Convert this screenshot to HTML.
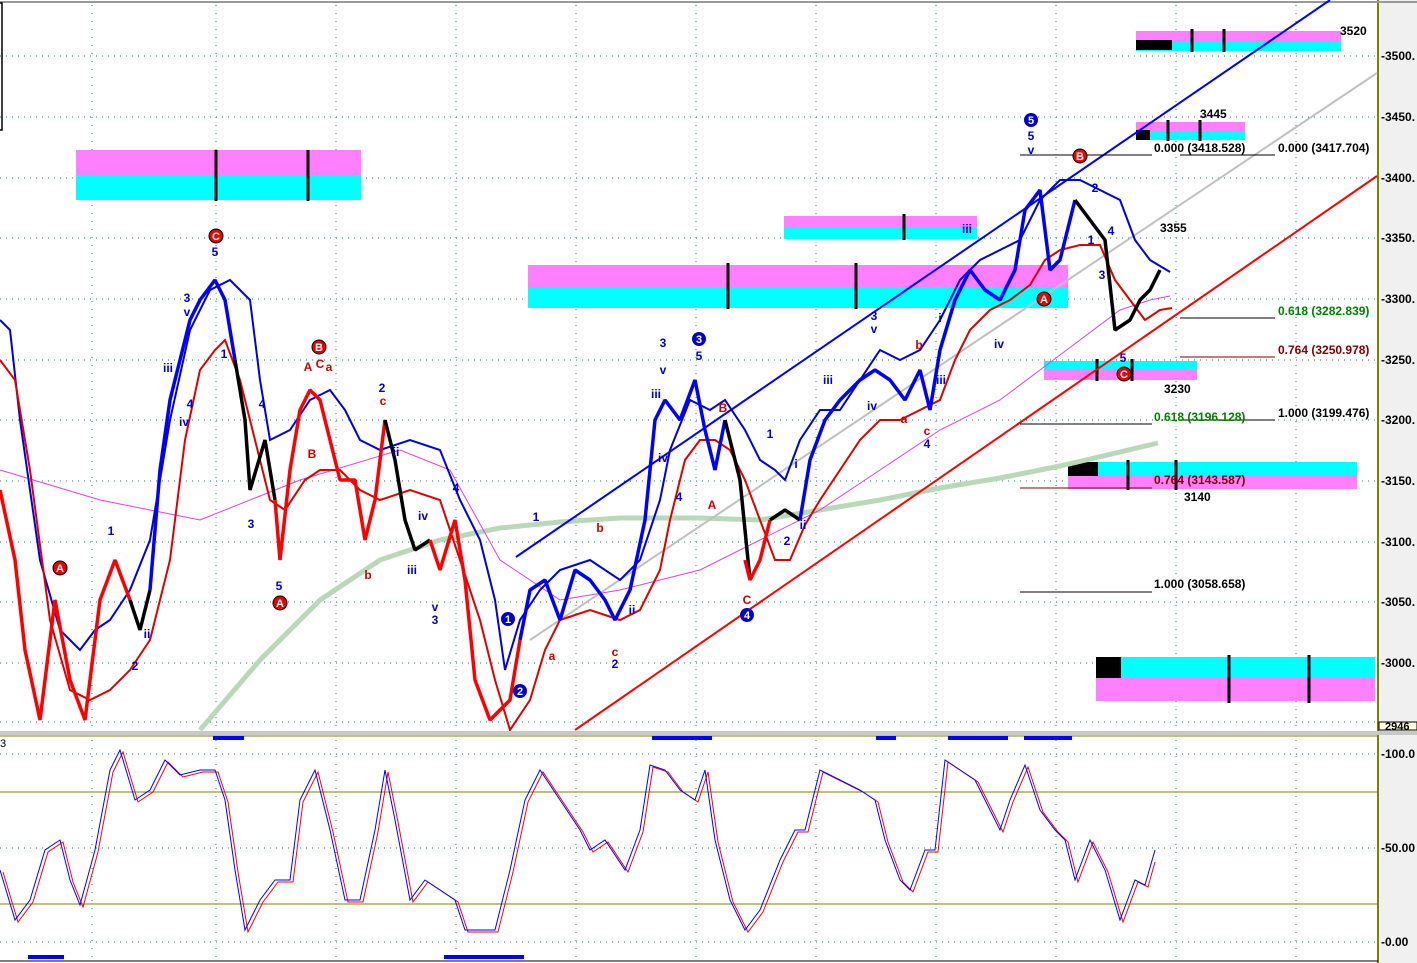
<!DOCTYPE html>
<html><head><meta charset="utf-8"><style>
html,body{margin:0;padding:0;background:#fff;}
svg{display:block;font-family:"Liberation Sans",Arial,sans-serif;}
</style></head><body>
<svg width="1417" height="963" viewBox="0 0 1417 963" xmlns="http://www.w3.org/2000/svg">
<rect x="0" y="0" width="1417" height="963" fill="#fff"/>
<rect x="1379" y="0" width="38" height="963" fill="#f0f0f0"/>
<line x1="1378" y1="0" x2="1378" y2="963" stroke="#808000" stroke-width="2"/>
<line x1="0" y1="2" x2="1417" y2="2" stroke="#999" stroke-width="2"/>
<rect x="-1" y="3" width="3" height="127" fill="none" stroke="#000" stroke-width="1.5"/>
<g stroke="#008080" stroke-width="1" stroke-dasharray="1,5">
<line x1="0" y1="56" x2="1377" y2="56"/><line x1="0" y1="117" x2="1377" y2="117"/>
<line x1="0" y1="178" x2="1377" y2="178"/><line x1="0" y1="238" x2="1377" y2="238"/>
<line x1="0" y1="299" x2="1377" y2="299"/><line x1="0" y1="360" x2="1377" y2="360"/>
<line x1="0" y1="420" x2="1377" y2="420"/><line x1="0" y1="481" x2="1377" y2="481"/>
<line x1="0" y1="542" x2="1377" y2="542"/><line x1="0" y1="602" x2="1377" y2="602"/>
<line x1="0" y1="663" x2="1377" y2="663"/><line x1="0" y1="722" x2="1377" y2="722"/>
<line x1="0" y1="754" x2="1377" y2="754"/><line x1="0" y1="848" x2="1377" y2="848"/><line x1="0" y1="942" x2="1377" y2="942"/>
</g>
<g stroke="#008080" stroke-width="1" stroke-dasharray="1,7">
<line x1="92" y1="5" x2="92" y2="730"/><line x1="216" y1="5" x2="216" y2="730"/><line x1="336" y1="5" x2="336" y2="730"/>
<line x1="456" y1="5" x2="456" y2="730"/><line x1="576" y1="5" x2="576" y2="730"/><line x1="696" y1="5" x2="696" y2="730"/>
<line x1="816" y1="5" x2="816" y2="730"/><line x1="936" y1="5" x2="936" y2="730"/><line x1="1056" y1="5" x2="1056" y2="730"/>
<line x1="1176" y1="5" x2="1176" y2="730"/><line x1="1296" y1="5" x2="1296" y2="730"/>
<line x1="92" y1="740" x2="92" y2="960"/><line x1="216" y1="740" x2="216" y2="960"/><line x1="336" y1="740" x2="336" y2="960"/>
<line x1="456" y1="740" x2="456" y2="960"/><line x1="576" y1="740" x2="576" y2="960"/><line x1="696" y1="740" x2="696" y2="960"/>
<line x1="816" y1="740" x2="816" y2="960"/><line x1="936" y1="740" x2="936" y2="960"/><line x1="1056" y1="740" x2="1056" y2="960"/>
<line x1="1176" y1="740" x2="1176" y2="960"/><line x1="1296" y1="740" x2="1296" y2="960"/>
</g>
<rect x="76" y="150" width="285" height="25" fill="#ff80ff"/><rect x="76" y="175" width="285" height="25" fill="#00ffff"/>
<rect x="528" y="265" width="540" height="22" fill="#ff80ff"/><rect x="528" y="287" width="540" height="21" fill="#00ffff"/>
<rect x="784" y="216" width="193" height="12" fill="#ff80ff"/><rect x="784" y="228" width="193" height="11" fill="#00ffff"/>
<rect x="1136" y="31" width="205" height="10" fill="#ff80ff"/><rect x="1136" y="41" width="205" height="10" fill="#00ffff"/><rect x="1136" y="40" width="36" height="10" fill="#000"/>
<rect x="1136" y="122" width="109" height="9" fill="#ff80ff"/><rect x="1136" y="131" width="109" height="9" fill="#00ffff"/><rect x="1136" y="130" width="14" height="10" fill="#000"/>
<rect x="1044" y="361" width="153" height="9" fill="#00ffff"/><rect x="1044" y="370" width="153" height="10" fill="#ff80ff"/>
<rect x="1068" y="462" width="289" height="14" fill="#00ffff"/><rect x="1068" y="476" width="289" height="13" fill="#ff80ff"/><rect x="1068" y="462" width="30" height="14" fill="#000"/>
<rect x="1096" y="657" width="279" height="21" fill="#00ffff"/><rect x="1096" y="678" width="279" height="23" fill="#ff80ff"/><rect x="1096" y="657" width="25" height="21" fill="#000"/>
<g stroke="#000" stroke-width="3">
<line x1="216" y1="150" x2="216" y2="201"/><line x1="308" y1="150" x2="308" y2="201"/>
<line x1="728" y1="263" x2="728" y2="309"/><line x1="856" y1="263" x2="856" y2="309"/>
<line x1="904" y1="214" x2="904" y2="240"/>
<line x1="1192" y1="29" x2="1192" y2="52"/><line x1="1224" y1="29" x2="1224" y2="52"/>
<line x1="1168" y1="120" x2="1168" y2="141"/><line x1="1200" y1="120" x2="1200" y2="141"/>
<line x1="1097" y1="359" x2="1097" y2="381"/><line x1="1132" y1="359" x2="1132" y2="381"/>
<line x1="1128" y1="460" x2="1128" y2="490"/><line x1="1176" y1="460" x2="1176" y2="490"/>
<line x1="1229" y1="655" x2="1229" y2="703"/><line x1="1309" y1="655" x2="1309" y2="703"/>
</g>
<polyline fill="none" stroke="#b8d8b8" stroke-width="5" points="200,730 260,660 320,600 380,560 440,540 500,528 560,522 620,518 700,518 760,520 820,510 880,500 940,488 1000,478 1060,466 1120,452 1158,443"/>
<polyline fill="none" stroke="#e040e0" stroke-width="1" points="0,470 100,500 200,520 300,480 400,450 450,470 500,560 560,600 620,590 700,570 760,540 820,510 880,470 940,430 1000,400 1040,370 1080,340 1120,310 1150,300 1170,296"/>
<line x1="530" y1="640" x2="1377" y2="73" stroke="#c0c0c0" stroke-width="2"/>
<line x1="516" y1="557" x2="1330" y2="0" stroke="#0000ff" stroke-width="2"/>
<line x1="575" y1="730" x2="1377" y2="176" stroke="#ff0000" stroke-width="2"/>
<polyline fill="none" stroke="#0000e0" stroke-width="2" points="0,320 10,330 20,420 40,560 60,630 80,650 95,630 110,620 130,590 150,540 170,420 190,330 210,290 230,280 250,300 260,380 270,440 290,430 310,400 330,390 345,410 360,440 380,450 410,440 440,450 460,500 480,540 495,600 505,670 520,620 540,590 560,570 590,560 620,580 640,560 660,500 670,450 690,400 710,410 725,400 745,430 760,460 775,470 785,480 800,440 820,410 840,410 860,380 880,350 900,360 920,350 940,320 960,280 980,260 1000,250 1020,240 1040,200 1060,180 1080,180 1100,190 1120,200 1135,240 1150,260 1170,272"/>
<polyline fill="none" stroke="#e00000" stroke-width="2" points="0,360 15,380 30,470 50,620 70,690 90,700 110,690 130,670 150,640 170,560 185,440 200,370 215,350 225,340 240,380 255,440 270,500 285,510 305,480 320,470 340,470 360,490 380,500 410,490 440,500 460,560 480,620 495,680 510,730 530,700 545,650 560,620 590,610 620,620 640,610 660,570 670,520 685,460 700,440 715,440 730,450 745,480 760,520 775,560 790,560 805,525 820,500 840,470 860,440 880,420 900,420 920,410 940,400 955,360 970,330 990,310 1010,300 1030,285 1045,260 1060,250 1080,245 1100,245 1115,280 1130,300 1145,320 1160,310 1172,308"/>
<g fill="none" stroke-width="3.5" stroke-linejoin="bevel">
<polyline stroke="#ff0000" points="0,490 15,560 25,650 40,720 55,600 70,680 85,720 100,600 115,560 130,600"/>
<polyline stroke="#000" points="130,600 140,630 150,590"/>
<polyline stroke="#0000ff" points="150,590 160,470 170,400 180,360 190,320 200,300 215,280 225,300 235,360"/>
<polyline stroke="#000" points="235,360 245,420 250,490 265,440 275,500"/>
<polyline stroke="#ff0000" points="275,500 280,560 290,470 300,410 310,390 320,400 330,440 340,480 355,480 365,540 375,500 385,420"/>
<polyline stroke="#000" points="385,420 395,460 405,520 415,550 430,540"/>
<polyline stroke="#ff0000" points="430,540 440,570 455,520 465,580 475,680 490,720 510,700 520,640"/>
<polyline stroke="#0000ff" points="520,640 530,590 545,580 560,620 575,570 590,580 605,600 615,620 630,590 645,520 655,420 665,400 680,420 695,380 705,430 715,470 725,420"/>
<polyline stroke="#000" points="725,420 740,480 750,580"/>
<polyline stroke="#ff0000" points="745,560 750,580 760,560 770,520"/>
<polyline stroke="#000" points="770,520 785,510 800,520"/>
<polyline stroke="#0000ff" points="800,520 810,460 825,420 840,400 860,380 875,370 890,380 905,400 920,370 930,410 940,350 955,300 970,270 985,290 1000,300 1015,270 1025,210 1040,190 1050,270 1060,260 1075,200"/>
<polyline stroke="#000" points="1075,200 1090,220 1105,240 1115,330 1130,320 1140,300 1150,290 1160,270"/>
</g>
<g stroke-width="1">
<line x1="1020" y1="155" x2="1152" y2="155" stroke="#000"/><line x1="1180" y1="155" x2="1275" y2="155" stroke="#000"/>
<line x1="1180" y1="318" x2="1275" y2="318" stroke="#000"/><line x1="1180" y1="357" x2="1275" y2="357" stroke="#800000"/>
<line x1="1020" y1="424" x2="1152" y2="424" stroke="#000"/><line x1="1180" y1="420" x2="1275" y2="420" stroke="#000"/>
<line x1="1020" y1="488" x2="1152" y2="488" stroke="#800000"/><line x1="1020" y1="592" x2="1152" y2="592" stroke="#000"/>
</g>
<g font-size="12" font-weight="bold">
<text x="1154" y="152">0.000  (3418.528)</text>
<text x="1278" y="152">0.000  (3417.704)</text>
<text x="1278" y="315" fill="#008000">0.618  (3282.839)</text>
<text x="1278" y="354" fill="#800000">0.764  (3250.978)</text>
<text x="1154" y="421" fill="#008000">0.618  (3196.128)</text>
<text x="1278" y="417">1.000  (3199.476)</text>
<text x="1154" y="484" fill="#800000">0.764  (3143.587)</text>
<text x="1154" y="588">1.000  (3058.658)</text>
<text x="1340" y="35">3520</text><text x="1200" y="118">3445</text><text x="1160" y="232">3355</text>
<text x="1164" y="393">3230</text><text x="1184" y="501">3140</text>
</g>
<g font-size="12" font-weight="bold" fill="#000">
<text x="1381" y="60">-3500.</text><text x="1381" y="121">-3450.</text><text x="1381" y="182">-3400.</text>
<text x="1381" y="242">-3350.</text><text x="1381" y="303">-3300.</text><text x="1381" y="364">-3250.</text>
<text x="1381" y="424">-3200.</text><text x="1381" y="485">-3150.</text><text x="1381" y="546">-3100.</text>
<text x="1381" y="606">-3050.</text><text x="1381" y="667">-3000.</text>
<text x="1381" y="758">-100.0</text><text x="1381" y="852">-50.00</text><text x="1381" y="946">-0.00</text>
</g>
<rect x="1379" y="722" width="38" height="8" fill="#ffffe0" stroke="#000" stroke-width="1"/>
<text x="1385" y="730" font-size="11" font-weight="bold">2946</text>
<rect x="0" y="731" width="1417" height="4" fill="#c8c8c8"/>
<line x1="0" y1="736" x2="1378" y2="736" stroke="#808000" stroke-width="1"/>
<text x="0" y="747" font-size="11">3</text>
<line x1="0" y1="792" x2="1377" y2="792" stroke="#808000" stroke-width="1"/>
<line x1="0" y1="904" x2="1377" y2="904" stroke="#808000" stroke-width="1"/>
<line x1="0" y1="961" x2="1378" y2="961" stroke="#000" stroke-width="1"/>
<g stroke="#0000ff" stroke-width="4">
<line x1="213" y1="738" x2="244" y2="738"/><line x1="652" y1="738" x2="712" y2="738"/><line x1="876" y1="738" x2="896" y2="738"/>
<line x1="948" y1="738" x2="1008" y2="738"/><line x1="1024" y1="738" x2="1072" y2="738"/>
<line x1="28" y1="957" x2="64" y2="957"/><line x1="444" y1="957" x2="524" y2="957"/>
</g>
<polyline fill="none" stroke="#ff0000" stroke-width="1" transform="translate(3,2)" points="0,870 15,920 30,900 45,850 60,840 70,880 80,905 95,850 110,770 120,750 135,800 150,790 165,760 180,775 200,770 215,770 225,800 235,870 245,930 260,900 275,880 290,880 300,800 315,770 330,830 345,900 360,900 375,830 385,770 395,820 410,900 425,880 440,890 455,900 465,930 480,930 495,930 510,870 525,800 540,770 560,800 580,830 590,850 605,840 625,870 640,830 650,765 665,770 680,790 695,800 705,770 715,840 730,900 745,930 760,910 780,860 795,830 805,830 820,770 840,780 860,790 875,800 885,840 900,880 910,890 925,850 935,850 945,760 960,770 975,780 990,810 1000,830 1010,800 1025,765 1040,810 1055,830 1065,840 1075,880 1090,840 1105,870 1120,920 1135,880 1145,885 1152,860"/>
<polyline fill="none" stroke="#0000ff" stroke-width="1" points="0,870 15,920 30,900 45,850 60,840 70,880 80,905 95,850 110,770 120,750 135,800 150,790 165,760 180,775 200,770 215,770 225,800 235,870 245,930 260,900 275,880 290,880 300,800 315,770 330,830 345,900 360,900 375,830 385,770 395,820 410,900 425,880 440,890 455,900 465,930 480,930 495,930 510,870 525,800 540,770 560,800 580,830 590,850 605,840 625,870 640,830 650,765 665,770 680,790 695,800 705,770 715,840 730,900 745,930 760,910 780,860 795,830 805,830 820,770 840,780 860,790 875,800 885,840 900,880 910,890 925,850 935,850 945,760 960,770 975,780 990,810 1000,830 1010,800 1025,765 1040,810 1055,830 1065,840 1075,880 1090,840 1105,870 1120,920 1135,880 1145,885 1155,850"/>
<g font-size="11" font-weight="bold" text-anchor="middle">
<g fill="#0000cc"><circle cx="508" cy="619" r="7"/><circle cx="520" cy="691" r="7"/><circle cx="699" cy="339" r="7"/><circle cx="747" cy="615" r="7"/><circle cx="1031" cy="120" r="7"/></g>
<g fill="#fff"><text x="508" y="623">1</text><text x="520" y="695">2</text><text x="699" y="343">3</text><text x="747" y="619">4</text><text x="1031" y="124">5</text></g>
<g fill="#ee0000" stroke="#000" stroke-width="1"><circle cx="216" cy="236" r="7"/><circle cx="60" cy="568" r="7"/><circle cx="280" cy="603" r="7"/><circle cx="319" cy="347" r="7"/><circle cx="1080" cy="156" r="7"/><circle cx="1044" cy="299" r="7"/><circle cx="1124" cy="374" r="7"/></g>
<g fill="#fff"><text x="216" y="240">C</text><text x="60" y="572">A</text><text x="280" y="607">A</text><text x="319" y="351">B</text><text x="1080" y="160">B</text><text x="1044" y="303">A</text><text x="1124" y="378">C</text></g>
</g>
<g font-size="12" font-weight="bold" text-anchor="middle">
<g fill="#0000cc">
<text x="215" y="256">5</text><text x="187" y="302">3</text><text x="187" y="316">v</text><text x="168" y="372">iii</text><text x="190" y="408">4</text><text x="184" y="426">iv</text>
<text x="111" y="535">1</text><text x="135" y="670">2</text><text x="147" y="638">ii</text><text x="251" y="528">3</text><text x="279" y="590">5</text><text x="262" y="408">4</text><text x="224" y="358">1</text>
<text x="382" y="392">2</text><text x="396" y="456">ii</text><text x="423" y="520">iv</text><text x="412" y="574">iii</text><text x="435" y="611">v</text><text x="435" y="624">3</text><text x="456" y="492">4</text>
<text x="663" y="347">3</text><text x="663" y="374">v</text><text x="656" y="398">iii</text><text x="663" y="462">iv</text><text x="699" y="360">5</text><text x="679" y="501">4</text>
<text x="536" y="521">1</text><text x="615" y="668">2</text><text x="632" y="614">ii</text><text x="770" y="438">1</text><text x="787" y="545">2</text><text x="803" y="529">ii</text><text x="796" y="468">i</text><text x="828" y="384">iii</text>
<text x="874" y="320">3</text><text x="874" y="333">v</text><text x="872" y="410">iv</text><text x="927" y="448">4</text><text x="941" y="384">iii</text><text x="940" y="322">i</text>
<text x="967" y="233">iii</text><text x="999" y="348">iv</text><text x="1031" y="140">5</text><text x="1031" y="154">v</text><text x="1095" y="192">2</text><text x="1091" y="244">1</text><text x="1102" y="279">3</text><text x="1111" y="235">4</text><text x="1123" y="362">5</text>
</g>
<g fill="#cc0000">
<text x="308" y="371">A</text><text x="320" y="368">C</text><text x="329" y="371">a</text><text x="312" y="458">B</text><text x="383" y="405">c</text><text x="368" y="579">b</text>
<text x="723" y="412">B</text><text x="712" y="509">A</text><text x="747" y="604">C</text><text x="600" y="532">b</text><text x="552" y="660">a</text><text x="615" y="656">c</text>
<text x="919" y="349">b</text><text x="904" y="423">a</text><text x="927" y="435">c</text>
</g>
</g>
</svg>
</body></html>
